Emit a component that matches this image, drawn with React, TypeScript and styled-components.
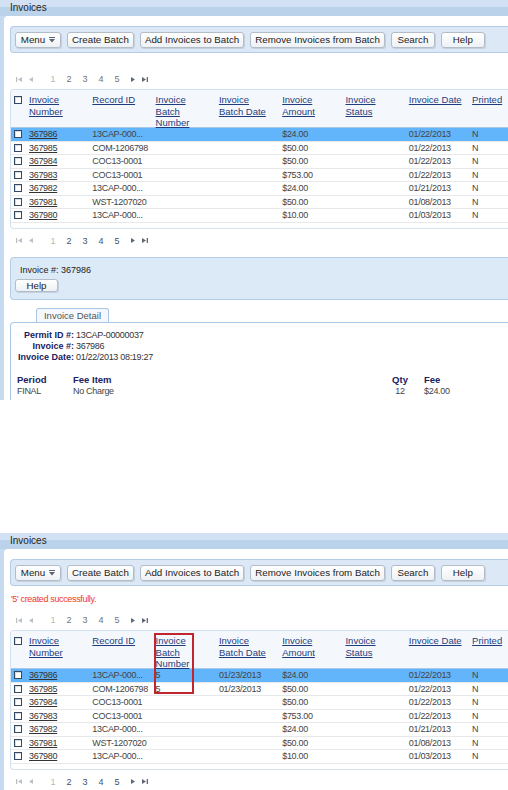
import styled, { createGlobalStyle } from "styled-components";

interface Invoice {
  number: string;
  recordId: string;
  batch?: string;
  batchDate?: string;
  amount: string;
  status?: string;
  date: string;
  printed: string;
}

const baseInvoices: Invoice[] = [
  { number: "367986", recordId: "13CAP-000...", amount: "$24.00", date: "01/22/2013", printed: "N" },
  { number: "367985", recordId: "COM-1206798", amount: "$50.00", date: "01/22/2013", printed: "N" },
  { number: "367984", recordId: "COC13-0001", amount: "$50.00", date: "01/22/2013", printed: "N" },
  { number: "367983", recordId: "COC13-0001", amount: "$753.00", date: "01/22/2013", printed: "N" },
  { number: "367982", recordId: "13CAP-000...", amount: "$24.00", date: "01/21/2013", printed: "N" },
  { number: "367981", recordId: "WST-1207020", amount: "$50.00", date: "01/08/2013", printed: "N" },
  { number: "367980", recordId: "13CAP-000...", amount: "$10.00", date: "01/03/2013", printed: "N" },
];

const batchedInvoices: Invoice[] = baseInvoices.map((inv, i) =>
  i < 2 ? { ...inv, batch: "5", batchDate: "01/23/2013" } : inv
);

const columns = [
  "Invoice Number",
  "Record ID",
  "Invoice Batch Number",
  "Invoice Batch Date",
  "Invoice Amount",
  "Invoice Status",
  "Invoice Date",
  "Printed",
];

const toolbarButtons = [
  "Create Batch",
  "Add Invoices to Batch",
  "Remove Invoices from Batch",
  "Search",
  "Help",
];

const GlobalStyle = createGlobalStyle`
  html, body {
    margin: 0;
    padding: 0;
    background: #fff;
  }
  body {
    font-family: "Liberation Sans", Arial, sans-serif;
    color: #333;
  }
  * {
    box-sizing: border-box;
  }
`;

type PagerKind = "first" | "prev" | "next" | "last";

const PagerIcon = ({ kind, color }: { kind: PagerKind; color: string }) => (
  <svg width="6" height="7" viewBox="0 0 6 7" fill={color}>
    {kind === "first" && (
      <>
        <rect x="0" y="1" width="1.3" height="5" />
        <path d="M6 1 L2 3.5 L6 6 Z" />
      </>
    )}
    {kind === "prev" && <path d="M5 1 L1 3.5 L5 6 Z" />}
    {kind === "next" && <path d="M1 1 L5 3.5 L1 6 Z" />}
    {kind === "last" && (
      <>
        <path d="M0 1 L4 3.5 L0 6 Z" />
        <rect x="4.7" y="1" width="1.3" height="5" />
      </>
    )}
  </svg>
);

const MenuArrow = () => (
  <svg width="6" height="6" viewBox="0 0 6 6" fill="#5a6470">
    <rect x="0" y="0" width="6" height="1" />
    <path d="M0 2 L6 2 L3 5.5 Z" />
  </svg>
);

const Pager = ({ strong }: { strong?: boolean }) => (
  <PagerBar>
    <PagerArrows>
      <PagerIcon kind="first" color="#bcc1c7" />
      <PagerIcon kind="prev" color="#bcc1c7" />
    </PagerArrows>
    <PageNumbers>
      {[1, 2, 3, 4, 5].map((n) => (
        <PageNum key={n} $current={n === 1} $strong={strong}>
          {n}
        </PageNum>
      ))}
    </PageNumbers>
    <PagerArrows>
      <PagerIcon kind="next" color="#5d6878" />
      <PagerIcon kind="last" color="#5d6878" />
    </PagerArrows>
  </PagerBar>
);

const InvoiceTable = ({ rows, highlight }: { rows: Invoice[]; highlight?: boolean }) => (
  <TableBox>
    <HeaderRow>
      <CheckCell>
        <Check />
      </CheckCell>
      {columns.map((c) => (
        <HeaderCell key={c}>
          <HeaderLink>{c}</HeaderLink>
        </HeaderCell>
      ))}
    </HeaderRow>
    {rows.map((r, i) => (
      <Row key={r.number} $selected={i === 0}>
        <CheckCell>
          <Check />
        </CheckCell>
        <Cell>
          <NumberLink>{r.number}</NumberLink>
        </Cell>
        <Cell>{r.recordId}</Cell>
        <Cell>{r.batch}</Cell>
        <Cell>{r.batchDate}</Cell>
        <Cell>{r.amount}</Cell>
        <Cell>{r.status}</Cell>
        <Cell>{r.date}</Cell>
        <Cell>{r.printed}</Cell>
      </Row>
    ))}
    {highlight && <Callout />}
  </TableBox>
);

const InvoiceDetail = () => (
  <>
    <DetailPanel>
      <PanelTitle>Invoice #: 367986</PanelTitle>
      <SmallButton>Help</SmallButton>
    </DetailPanel>
    <TabStrip>
      <Tab>Invoice Detail</Tab>
    </TabStrip>
    <TabContent>
      <Fields>
        <FieldLabel>Permit ID #:</FieldLabel>
        <FieldValue>13CAP-00000037</FieldValue>
        <FieldLabel>Invoice #:</FieldLabel>
        <FieldValue>367986</FieldValue>
        <FieldLabel>Invoice Date:</FieldLabel>
        <FieldValue>01/22/2013 08:19:27</FieldValue>
      </Fields>
      <FeeGrid>
        <FeeHead>Period</FeeHead>
        <FeeHead>Fee Item</FeeHead>
        <FeeHead $center>Qty</FeeHead>
        <span />
        <FeeHead>Fee</FeeHead>
        <FeeValue>FINAL</FeeValue>
        <FeeValue>No Charge</FeeValue>
        <FeeValue $center>12</FeeValue>
        <span />
        <FeeValue>$24.00</FeeValue>
      </FeeGrid>
    </TabContent>
  </>
);

const InvoicesScreen = ({
  rows,
  message,
  highlight,
  showDetail,
  height,
}: {
  rows: Invoice[];
  message?: string;
  highlight?: boolean;
  showDetail?: boolean;
  height: number;
}) => (
  <Shot $height={height}>
    <TitleBar>Invoices</TitleBar>
    <Body>
      <Toolbar>
        <MenuButton>
          Menu <MenuArrow />
        </MenuButton>
        {toolbarButtons.map((b) => (
          <Button key={b}>{b}</Button>
        ))}
      </Toolbar>
      <Notice $empty={!message}>{message}</Notice>
      <Pager />
      <InvoiceTable rows={rows} highlight={highlight} />
      <BottomPager>
        <Pager strong />
      </BottomPager>
      {showDetail && <InvoiceDetail />}
    </Body>
  </Shot>
);

export default function App() {
  return (
    <>
      <GlobalStyle />
      <Page>
        <InvoicesScreen rows={baseInvoices} showDetail height={400} />
        <Spacer />
        <InvoicesScreen
          rows={batchedInvoices}
          message="'5' created successfully."
          highlight
          height={257}
        />
      </Page>
    </>
  );
}

const Page = styled.div`
  width: 508px;
  height: 790px;
  overflow: hidden;
  background: #fff;
  display: flex;
  flex-direction: column;
`;

const Spacer = styled.div`
  flex: none;
  height: 133px;
`;

const Shot = styled.section<{ $height: number }>`
  flex: none;
  width: 560px;
  height: ${(p) => p.$height}px;
  display: flex;
  flex-direction: column;
  background: #c6daf0;
  overflow: hidden;
`;

const TitleBar = styled.div`
  flex: none;
  height: 16px;
  line-height: 16px;
  padding-left: 10px;
  font-size: 10px;
  color: #222;
  background: linear-gradient(
    to bottom,
    #d2e1f3 0,
    #d2e1f3 7px,
    #bbd2eb 7px,
    #bbd2eb 16px
  );
`;

const Body = styled.div`
  flex: 1;
  margin-left: 4px;
  padding: 10px 0 0 6px;
  background: #fff;
  border-top-left-radius: 4px;
  display: flex;
  flex-direction: column;
`;

const Toolbar = styled.div`
  flex: none;
  height: 27px;
  display: flex;
  align-items: center;
  gap: 6px;
  padding-left: 4px;
  background: #dce8f5;
  border: 1px solid #b4cce6;
  border-right: none;
  border-radius: 4px 0 0 4px;
`;

const Button = styled.button`
  height: 16px;
  min-width: 44px;
  padding: 0 4px;
  font-family: inherit;
  font-size: 9.75px;
  color: #222;
  background: linear-gradient(to bottom, #ffffff, #eef1f5);
  border: 1px solid #b3bdc8;
  border-radius: 3px;
  box-shadow: 1px 1px 0 rgba(120, 140, 160, 0.25);
  display: inline-flex;
  align-items: center;
  justify-content: center;
  gap: 4px;
  white-space: nowrap;
`;

const MenuButton = styled(Button)`
  min-width: 46px;
`;

const SmallButton = styled(Button)`
  height: 13px;
  min-width: 43px;
  margin-top: 3px;
`;

const Notice = styled.div<{ $empty?: boolean }>`
  flex: none;
  margin-top: 7px;
  height: ${(p) => (p.$empty ? 4 : 12)}px;
  line-height: 12px;
  padding-left: 1px;
  font-size: 9px;
  letter-spacing: -0.35px;
  color: #ee3a1c;
`;

const PagerBar = styled.div`
  flex: none;
  margin-top: 9px;
  height: 12px;
  display: flex;
  align-items: center;
  padding-left: 6px;
  font-size: 9px;
`;

const PagerArrows = styled.span`
  display: flex;
  align-items: center;
  gap: 6px;
`;

const PageNumbers = styled.span`
  display: flex;
  gap: 10px;
  margin: 0 10px 0 16px;
`;

const PageNum = styled.span<{ $current?: boolean; $strong?: boolean }>`
  width: 6px;
  text-align: center;
  color: ${(p) => (p.$current ? "#b4b8bd" : p.$strong ? "#3d5170" : "#6e737a")};
`;

const BottomPager = styled.div`
  flex: none;
  margin-top: -3px;
`;

const TableBox = styled.div`
  position: relative;
  flex: none;
  margin-top: 4px;
  padding-bottom: 5px;
  border: 1px solid #d3e1f0;
  border-right: none;
  border-radius: 4px 0 0 4px;
  overflow: hidden;
`;

const gridColumns = "16px repeat(8, 63.3px)";

const HeaderRow = styled.div`
  display: grid;
  grid-template-columns: ${gridColumns};
  height: 38px;
  padding-top: 4px;
  background: #f4f8fc;
  border-bottom: 1px solid #a9c7e6;
`;

const HeaderCell = styled.div`
  padding-left: 2px;
  max-width: 58px;
  font-size: 9.5px;
  line-height: 11.5px;
`;

const HeaderLink = styled.span`
  color: #1f3d7c;
  text-decoration: underline;
  text-underline-offset: 1px;
`;

const Row = styled.div<{ $selected?: boolean }>`
  display: grid;
  grid-template-columns: ${gridColumns};
  align-items: center;
  height: 13.5px;
  background: ${(p) => (p.$selected ? "#63b5fb" : "#fff")};
  border-bottom: 1px solid #e6e8ea;
`;

const Cell = styled.div`
  padding-left: 2px;
  font-size: 9px;
  letter-spacing: -0.3px;
  line-height: 12px;
  color: #444;
  white-space: nowrap;
`;

const NumberLink = styled.span`
  color: #333;
  text-decoration: underline;
`;

const CheckCell = styled.div`
  padding-left: 3px;
  display: flex;
  align-items: center;
  align-self: start;
  height: 12px;
`;

const Check = styled.span`
  display: block;
  width: 8px;
  height: 8px;
  background: #fff;
  border: 1px solid #34495f;
  box-shadow: inset 1px 1px 0 #d8dde2;
`;

const Callout = styled.div`
  position: absolute;
  left: 143px;
  top: 2px;
  width: 40px;
  height: 61px;
  border: 2px solid #c0262d;
  pointer-events: none;
`;

const DetailPanel = styled.div`
  flex: none;
  margin-top: 10.5px;
  padding: 6px 4px 7px;
  background: #dce9f6;
  border: 1px solid #b5cde8;
  border-right: none;
  border-radius: 4px 0 0 4px;
  display: flex;
  flex-direction: column;
  align-items: flex-start;
`;

const PanelTitle = styled.div`
  padding-left: 5px;
  line-height: 12px;
  font-size: 9px;
  color: #222;
`;

const TabStrip = styled.div`
  flex: none;
  margin-top: 8px;
  padding-left: 26px;
  display: flex;
`;

const Tab = styled.div`
  width: 73px;
  height: 14px;
  line-height: 13px;
  text-align: center;
  font-size: 9.5px;
  color: #555;
  background: #f4f8fc;
  border: 1px solid #a9c8e8;
  border-bottom: none;
  border-radius: 3px 3px 0 0;
`;

const TabContent = styled.div`
  flex: 1;
  padding: 7px 6px;
  border-top: 1px solid #a9c8e8;
  border-left: 1px solid #a9c8e8;
  border-top-left-radius: 4px;
`;

const Fields = styled.div`
  display: grid;
  grid-template-columns: 57px auto;
  column-gap: 2px;
  line-height: 11px;
`;

const FieldLabel = styled.span`
  text-align: right;
  font-size: 9px;
  font-weight: bold;
  color: #1c2160;
`;

const FieldValue = styled.span`
  font-size: 9px;
  letter-spacing: -0.3px;
  color: #333;
`;

const FeeGrid = styled.div`
  margin-top: 11px;
  display: grid;
  grid-template-columns: 56px 319px 16px 16px auto;
  line-height: 11.5px;
`;

const FeeHead = styled.span<{ $center?: boolean }>`
  font-size: 9.5px;
  font-weight: bold;
  color: #1c2160;
  text-align: ${(p) => (p.$center ? "center" : "left")};
`;

const FeeValue = styled.span<{ $center?: boolean }>`
  font-size: 9px;
  letter-spacing: -0.3px;
  color: #444;
  text-align: ${(p) => (p.$center ? "center" : "left")};
`;
